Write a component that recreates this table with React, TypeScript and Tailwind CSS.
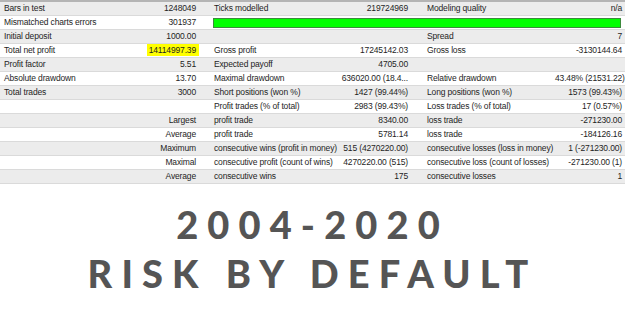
import React from 'react';

type Row = {
    a?: string;
    b?: string;
    c?: string;
    d?: string;
    e?: string;
    f?: string;
    lead?: string; // right aligned label across first two columns
    bar?: boolean;
    mark?: boolean;
};

const rows: Row[] = [
    { a: 'Bars in test', b: '1248049', c: 'Ticks modelled', d: '219724969', e: 'Modeling quality', f: 'n/a' },
    { a: 'Mismatched charts errors', b: '301937', bar: true },
    { a: 'Initial deposit', b: '1000.00', e: 'Spread', f: '7' },
    { a: 'Total net profit', b: '14114997.39', mark: true, c: 'Gross profit', d: '17245142.03', e: 'Gross loss', f: '-3130144.64' },
    { a: 'Profit factor', b: '5.51', c: 'Expected payoff', d: '4705.00' },
    { a: 'Absolute drawdown', b: '13.70', c: 'Maximal drawdown', d: '636020.00 (18.4...', e: 'Relative drawdown', f: '43.48% (21531.22)' },
    { a: 'Total trades', b: '3000', c: 'Short positions (won %)', d: '1427 (99.44%)', e: 'Long positions (won %)', f: '1573 (99.43%)' },
    { c: 'Profit trades (% of total)', d: '2983 (99.43%)', e: 'Loss trades (% of total)', f: '17 (0.57%)' },
    { lead: 'Largest', c: 'profit trade', d: '8340.00', e: 'loss trade', f: '-271230.00' },
    { lead: 'Average', c: 'profit trade', d: '5781.14', e: 'loss trade', f: '-184126.16' },
    { lead: 'Maximum', c: 'consecutive wins (profit in money)', d: '515 (4270220.00)', e: 'consecutive losses (loss in money)', f: '1 (-271230.00)' },
    { lead: 'Maximal', c: 'consecutive profit (count of wins)', d: '4270220.00 (515)', e: 'consecutive loss (count of losses)', f: '-271230.00 (1)' },
    { lead: 'Average', c: 'consecutive wins', d: '175', e: 'consecutive losses', f: '1' },
];

const ReportRow: React.FC<{ row: Row; odd: boolean }> = ({ row, odd }) => (
    <div className={`grid grid-cols-[130px_70px_140px_72px_143px_70px] h-[14px] items-center border-b border-[#dadada] ${odd ? 'bg-[#ececec]' : 'bg-white'}`}>
        {row.lead ? (
            <div className="col-span-2 text-right pr-[4px] whitespace-nowrap">{row.lead}</div>
        ) : (
            <>
                <div className="pl-[4px] whitespace-nowrap">{row.a}</div>
                <div className={`text-right whitespace-nowrap ${row.mark ? 'pr-[1px]' : 'pr-[4px]'}`}>
                    {row.mark ? <span className="bg-[#ffff00] pl-[2px] pr-[3px] py-[1px]">{row.b}</span> : row.b}
                </div>
            </>
        )}
        {row.bar ? (
            <div className="col-span-4 pl-[13px] pr-[4px] h-full flex items-center">
                <div className="w-full h-[10px] bg-[#00ff00] border border-[#3c8a3c]" />
            </div>
        ) : (
            <>
                <div className="pl-[14px] whitespace-nowrap">{row.c}</div>
                <div className="text-right pr-[4px] whitespace-nowrap">{row.d}</div>
                <div className="pl-[15px] whitespace-nowrap">{row.e}</div>
                <div className="text-right pr-[3px] whitespace-nowrap">{row.f}</div>
            </>
        )}
    </div>
);

export default function App() {
    return (
        <div className="w-[625px] h-[311px] bg-white overflow-hidden">
            <div className="border-t-2 border-[#b4b4b4] text-[8.5px] tracking-[-0.15px] leading-[13px] text-[#1e1e1e] font-['Liberation_Sans',sans-serif]">
                {rows.map((row, i) => (
                    <ReportRow key={i} row={row} odd={i % 2 === 0} />
                ))}
            </div>
            <div className="flex flex-col items-center pt-[16px] text-[#555555] font-['Lato',sans-serif] font-black text-[38px] leading-[49px] tracking-[0.24em]">
                <div>2004-2020</div>
                <div>RISK BY DEFAULT</div>
            </div>
        </div>
    );
}
